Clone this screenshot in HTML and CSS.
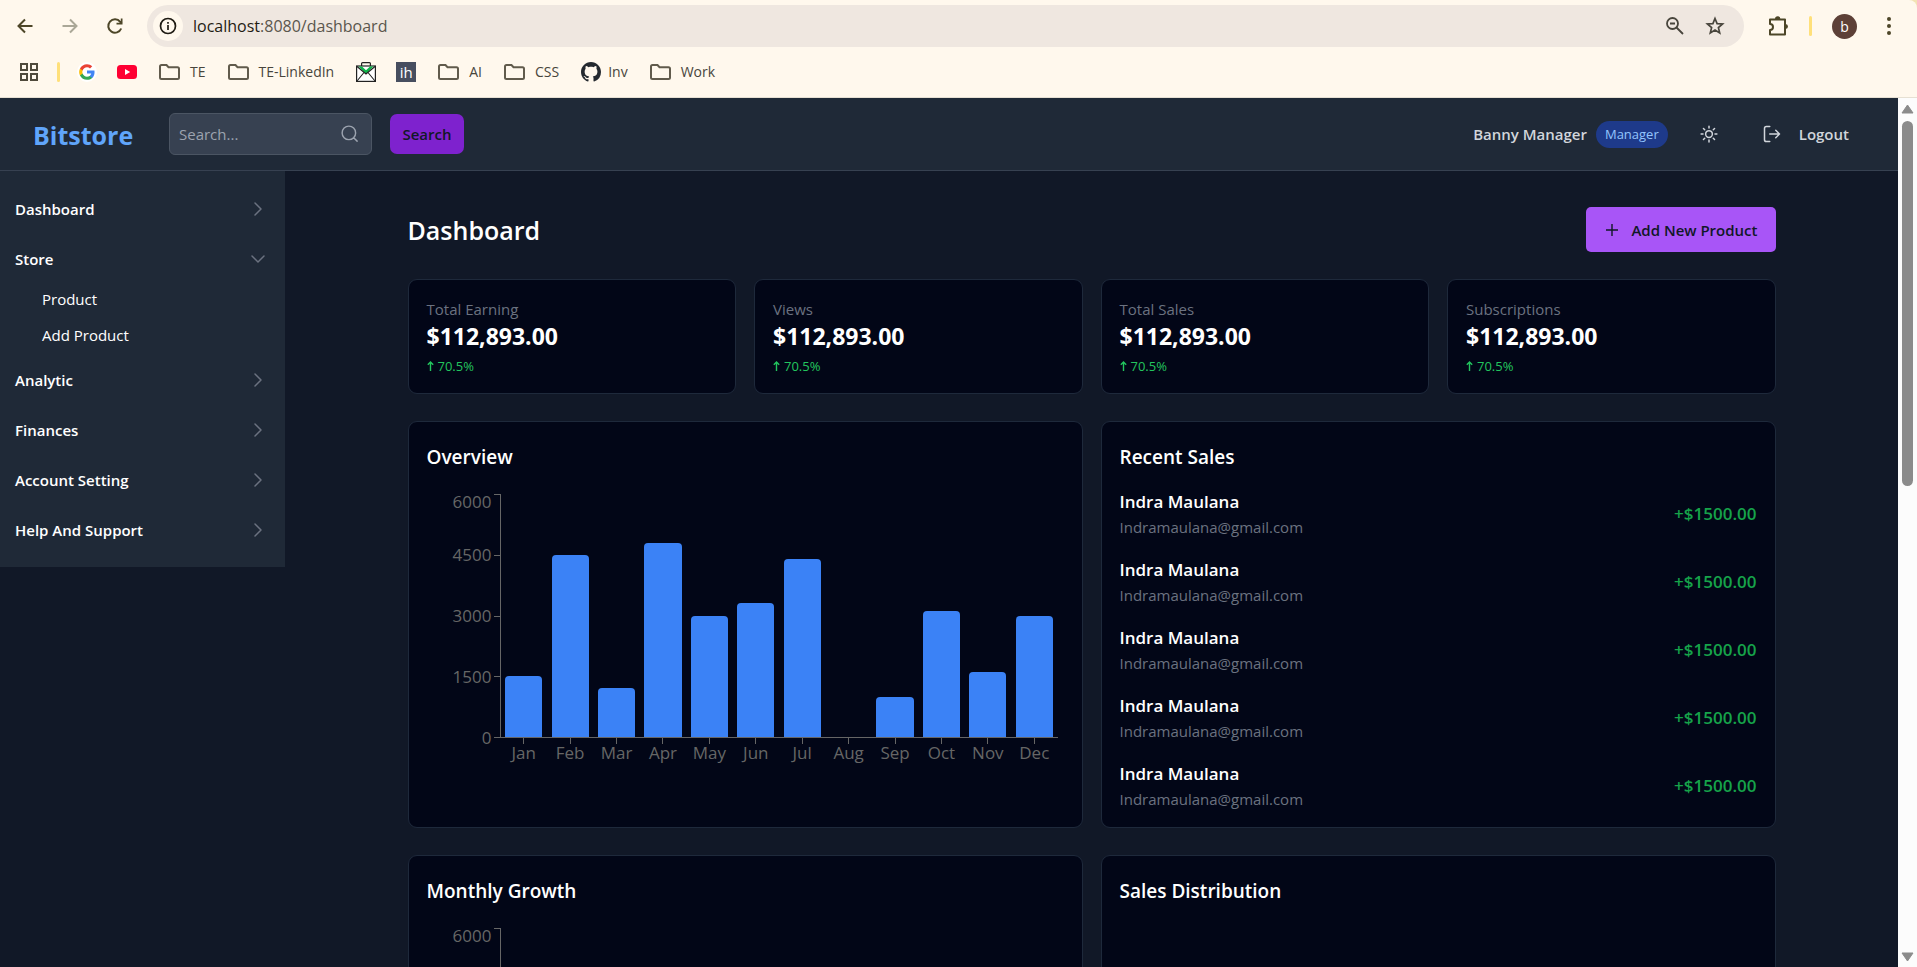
FILE: index.html
```html
<!DOCTYPE html>
<html lang="en">
<head>
<meta charset="utf-8">
<meta name="viewport" content="width=device-width, initial-scale=1">
<title>Bitstore Dashboard</title>
<link rel="stylesheet" href="styles.css">
</head>
<body>
<div class="browser">
  <div class="toolbar">
    <div class="nav-buttons">
      <button class="tool" aria-label="Back"><svg width="18" height="18" viewBox="0 0 18 18"><path d="M16.500 9H3M9 2.500L2.500 9L9 15.500" fill="none" stroke="#4d4628" stroke-width="2"/></svg></button>
      <button class="tool" aria-label="Forward"><svg width="18" height="18" viewBox="0 0 18 18"><path d="M1.500 9H15M9 2.500L15.500 9L9 15.500" fill="none" stroke="#aaa797" stroke-width="2"/></svg></button>
      <button class="tool" aria-label="Reload"><svg width="18" height="18" viewBox="0 0 18 18"><path d="M15.200 11.500A6.700 6.700 0 1 1 14.200 4.800L15.600 6.200" fill="none" stroke="#4d4628" stroke-width="2"/><path d="M16.500 1.500V7.500H10.500V5.800H14.800V1.500Z" fill="#4d4628"/></svg></button>
    </div>
    <div class="omnibox">
      <button class="site-info" aria-label="Site information"><svg width="18" height="18" viewBox="0 0 18 18"><circle cx="9" cy="9" r="7.500" fill="none" stroke="#1f1b13" stroke-width="1.700"/><path d="M9 8V13M9 5V6.700" stroke="#1f1b13" stroke-width="1.700"/></svg></button>
      <span class="url"><b>localhost</b>:8080/dashboard</span>
      <button class="tool" aria-label="Zoom"><svg width="20" height="20" viewBox="0 0 20 20"><circle cx="7.500" cy="7.500" r="5.500" fill="none" stroke="#48453c" stroke-width="1.800"/><path d="M5 7.500H10M11.500 11.500L18 18" stroke="#48453c" stroke-width="1.800"/></svg></button>
      <button class="tool" aria-label="Bookmark"><svg width="20" height="20" viewBox="0 0 20 20"><path d="M10 2.500L12.100 7.600L17.600 8L13.400 11.600L14.700 17L10 14.100L5.300 17L6.600 11.600L2.400 8L7.900 7.600Z" fill="none" stroke="#48453c" stroke-width="1.700"/></svg></button>
    </div>
    <button class="tool" aria-label="Extensions"><svg width="22" height="22" viewBox="0 0 22 22"><path d="M3 4.500H18V19.500H3V15A3 3 0 0 0 3 9Z" fill="none" stroke="#4d4628" stroke-width="2" stroke-linejoin="round"/><path d="M8 4A2.700 2.700 0 0 1 13.400 4ZM18.500 9A2.500 2.500 0 0 1 18.500 14Z" fill="#4d4628"/></svg></button>
    <span class="divider"></span>
    <button class="avatar" aria-label="Profile">b</button>
    <button class="tool" aria-label="Menu"><svg width="6" height="20" viewBox="0 0 6 20"><g fill="#4d4628"><circle cx="3" cy="3" r="2"/><circle cx="3" cy="10" r="2"/><circle cx="3" cy="17" r="2"/></g></svg></button>
  </div>
  <nav class="bookmarks" aria-label="Bookmarks">
    <button class="tool apps" aria-label="Apps"><svg width="18" height="18" viewBox="0 0 18 18"><path d="M1 1H7V7H1ZM11 1H17V7H11ZM1 11H7V17H1ZM11 11H17V17H11Z" fill="none" stroke="#4f4a3c" stroke-width="2"/></svg></button>
    <span class="divider"></span>
    <a class="mark google" href="#" aria-label="Google"><svg width="20" height="20" viewBox="0 0 28 28"><circle cx="14" cy="14" r="14" fill="#fff"/><g transform="translate(2 2)"><path fill="#4285F4" d="M22.560 12.250c0-.78-.07-1.530-.2-2.250H12v4.260h5.920c-.26 1.370-1.040 2.530-2.210 3.310v2.770h3.570c2.080-1.920 3.280-4.740 3.280-8.090z"/><path fill="#34A853" d="M12 23c2.970 0 5.460-.98 7.280-2.660l-3.570-2.770c-.98.66-2.230 1.060-3.710 1.060-2.860 0-5.290-1.930-6.160-4.530H2.180v2.840C3.990 20.530 7.700 23 12 23z"/><path fill="#FBBC05" d="M5.840 14.090c-.22-.66-.35-1.360-.35-2.090s.13-1.430.35-2.090V7.070H2.180C1.430 8.550 1 10.220 1 12s.43 3.450 1.180 4.930l3.660-2.840z"/><path fill="#EA4335" d="M12 5.380c1.620 0 3.060.56 4.210 1.640l3.150-3.150C17.450 2.090 14.970 1 12 1 7.700 1 3.990 3.470 2.180 7.070l3.660 2.840c.87-2.600 3.300-4.530 6.160-4.530z"/></g></svg></a>
    <a class="mark" href="#" aria-label="YouTube"><svg width="20" height="20" viewBox="0 0 20 20"><rect y="3" width="20" height="14" rx="3.500" fill="#f03"/><path d="M8 7L13.200 10L8 13Z" fill="#fff"/></svg></a>
    <a class="mark" href="#"><svg class="folder" width="21" height="16" viewBox="0 0 21 16"><path d="M1 13.500V2.500Q1 1 2.500 1H7.500L9.500 3.200H18.500Q20 3.200 20 4.700V13.500Q20 15 18.500 15H2.500Q1 15 1 13.500Z"/></svg>TE</a>
    <a class="mark" href="#"><svg class="folder" width="21" height="16" viewBox="0 0 21 16"><path d="M1 13.500V2.500Q1 1 2.500 1H7.500L9.500 3.200H18.500Q20 3.200 20 4.700V13.500Q20 15 18.500 15H2.500Q1 15 1 13.500Z"/></svg>TE-LinkedIn</a>
    <a class="mark" href="#" aria-label="Mail jobs"><svg width="20" height="20" viewBox="0 0 20 20"><path d="M5.600 4V1.500Q5.600 .6 6.600 .6H13.400Q14.400 .6 14.400 1.500V4" fill="none" stroke="#222" stroke-width="1.200"/><rect x=".6" y="4" width="18.800" height="15.400" fill="#fff" stroke="#222" stroke-width="1.200"/><path d="M2.500 4.600H6L10 8.200L14 4.600H17.500L10 12Z" fill="#0fb54b"/><path d="M1 4.500L10 12L19 4.500M1 19L8 10.500M19 19L12 10.500" fill="none" stroke="#222" stroke-width="1.100"/></svg></a>
    <a class="mark ih" href="#">ih</a>
    <a class="mark" href="#"><svg class="folder" width="21" height="16" viewBox="0 0 21 16"><path d="M1 13.500V2.500Q1 1 2.500 1H7.500L9.500 3.200H18.500Q20 3.200 20 4.700V13.500Q20 15 18.500 15H2.500Q1 15 1 13.500Z"/></svg>AI</a>
    <a class="mark" href="#"><svg class="folder" width="21" height="16" viewBox="0 0 21 16"><path d="M1 13.500V2.500Q1 1 2.500 1H7.500L9.500 3.200H18.500Q20 3.200 20 4.700V13.500Q20 15 18.500 15H2.500Q1 15 1 13.500Z"/></svg>CSS</a>
    <a class="mark github" href="#"><svg width="20" height="20" viewBox="0 0 16 16"><path fill="#24292f" d="M8 0C3.580 0 0 3.580 0 8c0 3.540 2.290 6.530 5.470 7.590.4.070.55-.17.55-.38 0-.19-.01-.82-.01-1.490-2.010.37-2.530-.49-2.690-.94-.09-.23-.48-.94-.82-1.130-.28-.15-.68-.52-.01-.53.63-.01 1.080.58 1.230.82.72 1.210 1.870.87 2.330.66.070-.52.28-.87.51-1.070-1.780-.2-3.640-.89-3.640-3.950 0-.87.31-1.590.82-2.150-.08-.2-.36-1.020.08-2.120 0 0 .67-.21 2.200.82.64-.18 1.320-.27 2-.27s1.360.09 2 .27c1.530-1.040 2.200-.82 2.200-.82.44 1.100.16 1.920.08 2.120.51.56.82 1.270.82 2.150 0 3.070-1.870 3.750-3.650 3.950.29.25.54.73.54 1.480 0 1.070-.01 1.930-.01 2.200 0 .21.15.46.55.38A8.010 8.010 0 0 0 16 8c0-4.420-3.580-8-8-8z"/></svg>Inv</a>
    <a class="mark" href="#"><svg class="folder" width="21" height="16" viewBox="0 0 21 16"><path d="M1 13.500V2.500Q1 1 2.500 1H7.500L9.500 3.200H18.500Q20 3.200 20 4.700V13.500Q20 15 18.500 15H2.500Q1 15 1 13.500Z"/></svg>Work</a>
  </nav>
</div>

<div class="viewport">
  <div class="page">
    <header class="topbar">
      <a class="brand" href="#">Bitstore</a>
      <form class="search">
        <label class="search-box">
          <input type="text" placeholder="Search..." aria-label="Search">
          <svg width="18" height="18" viewBox="0 0 24 24"><path d="M21.500 21.500l-4.600-4.600M19.500 10.500a9 9 0 1 1-18 0a9 9 0 0 1 18 0Z" fill="none" stroke="#9ca3af" stroke-width="1.900" stroke-linecap="round"/></svg>
        </label>
        <button class="search-button" type="button">Search</button>
      </form>
      <div class="account">
        <span class="user">Banny Manager</span>
        <span class="badge">Manager</span>
        <button class="theme" aria-label="Toggle theme"><svg width="18" height="18" viewBox="0 0 24 24" fill="none" stroke="#d1d5db" stroke-width="2" stroke-linecap="round"><circle cx="12" cy="12" r="4.500"/><path d="M12 1.500V4M12 20V22.500M4.600 4.600L6.300 6.300M17.700 17.700L19.400 19.400M1.500 12H4M20 12H22.500M4.600 19.400L6.300 17.700M17.700 6.300L19.400 4.600"/></svg></button>
        <button class="logout"><svg width="18" height="18" viewBox="0 0 24 24" fill="none" stroke="#d1d5db" stroke-width="2" stroke-linecap="round" stroke-linejoin="round"><path d="M9 2H4.500Q2 2 2 4.500V19.500Q2 22 4.500 22H9M9 12H22M17 7L22 12L17 17"/></svg>Logout</button>
      </div>
    </header>

    <div class="body">
      <nav class="sidebar" aria-label="Main">
        <ul class="menu">
          <li><button class="entry">Dashboard<svg class="chevron" width="18" height="18" viewBox="0 0 18 18"><path d="M6 3L12 9L6 15"/></svg></button></li>
          <li class="open"><button class="entry" aria-expanded="true">Store<svg class="chevron" width="18" height="18" viewBox="0 0 18 18"><path d="M3 6L9 12L15 6"/></svg></button>
            <ul class="submenu">
              <li><a href="#">Product</a></li>
              <li><a href="#">Add Product</a></li>
            </ul>
          </li>
          <li><button class="entry">Analytic<svg class="chevron" width="18" height="18" viewBox="0 0 18 18"><path d="M6 3L12 9L6 15"/></svg></button></li>
          <li><button class="entry">Finances<svg class="chevron" width="18" height="18" viewBox="0 0 18 18"><path d="M6 3L12 9L6 15"/></svg></button></li>
          <li><button class="entry">Account Setting<svg class="chevron" width="18" height="18" viewBox="0 0 18 18"><path d="M6 3L12 9L6 15"/></svg></button></li>
          <li><button class="entry">Help And Support<svg class="chevron" width="18" height="18" viewBox="0 0 18 18"><path d="M6 3L12 9L6 15"/></svg></button></li>
        </ul>
      </nav>

      <main class="main">
        <div class="content">
          <div class="heading">
            <h1>Dashboard</h1>
            <button class="add"><svg width="16" height="16" viewBox="0 0 16 16"><path d="M8 2V14M2 8H14" stroke="#111827" stroke-width="1.400"/></svg>Add New Product</button>
          </div>

          <section class="stats">
            <article class="card stat"><p class="label">Total Earning</p><p class="amount">$112,893.00</p><p class="change"><svg width="7" height="10" viewBox="0 0 7 10"><path d="M3.500 10V1M.8 3.700L3.500 1L6.200 3.700"/></svg>70.5%</p></article>
            <article class="card stat"><p class="label">Views</p><p class="amount">$112,893.00</p><p class="change"><svg width="7" height="10" viewBox="0 0 7 10"><path d="M3.500 10V1M.8 3.700L3.500 1L6.200 3.700"/></svg>70.5%</p></article>
            <article class="card stat"><p class="label">Total Sales</p><p class="amount">$112,893.00</p><p class="change"><svg width="7" height="10" viewBox="0 0 7 10"><path d="M3.500 10V1M.8 3.700L3.500 1L6.200 3.700"/></svg>70.5%</p></article>
            <article class="card stat"><p class="label">Subscriptions</p><p class="amount">$112,893.00</p><p class="change"><svg width="7" height="10" viewBox="0 0 7 10"><path d="M3.500 10V1M.8 3.700L3.500 1L6.200 3.700"/></svg>70.5%</p></article>
          </section>

          <section class="panels">
            <article class="card panel">
              <h2>Overview</h2>
              <div class="chart">
                <div class="y-axis"><span>6000</span><span>4500</span><span>3000</span><span>1500</span><span>0</span></div>
                <div class="ticks"><i></i><i></i><i></i><i></i><i></i></div>
                <div class="plot">
                  <div class="bar" style="height:25%"></div>
                  <div class="bar" style="height:75%"></div>
                  <div class="bar" style="height:20%"></div>
                  <div class="bar" style="height:80%"></div>
                  <div class="bar" style="height:50%"></div>
                  <div class="bar" style="height:55%"></div>
                  <div class="bar" style="height:73.33%"></div>
                  <div class="bar" style="height:0%"></div>
                  <div class="bar" style="height:16.67%"></div>
                  <div class="bar" style="height:51.67%"></div>
                  <div class="bar" style="height:26.67%"></div>
                  <div class="bar" style="height:50%"></div>
                </div>
                <div class="x-axis"><span>Jan</span><span>Feb</span><span>Mar</span><span>Apr</span><span>May</span><span>Jun</span><span>Jul</span><span>Aug</span><span>Sep</span><span>Oct</span><span>Nov</span><span>Dec</span></div>
              </div>
            </article>
            <article class="card panel">
              <h2>Recent Sales</h2>
              <ul class="sales">
                <li><div><p class="name">Indra Maulana</p><p class="email">Indramaulana@gmail.com</p></div><span class="sum">+$1500.00</span></li>
                <li><div><p class="name">Indra Maulana</p><p class="email">Indramaulana@gmail.com</p></div><span class="sum">+$1500.00</span></li>
                <li><div><p class="name">Indra Maulana</p><p class="email">Indramaulana@gmail.com</p></div><span class="sum">+$1500.00</span></li>
                <li><div><p class="name">Indra Maulana</p><p class="email">Indramaulana@gmail.com</p></div><span class="sum">+$1500.00</span></li>
                <li><div><p class="name">Indra Maulana</p><p class="email">Indramaulana@gmail.com</p></div><span class="sum">+$1500.00</span></li>
              </ul>
            </article>
            <article class="card panel">
              <h2>Monthly Growth</h2>
              <div class="chart">
                <div class="y-axis"><span>6000</span></div>
                <div class="ticks"><i></i><i></i><i></i><i></i><i></i></div>
                <div class="plot"></div>
              </div>
            </article>
            <article class="card panel">
              <h2>Sales Distribution</h2>
            </article>
          </section>
        </div>
      </main>
    </div>
  </div>
  <div class="scrollbar" aria-hidden="true">
    <svg width="13" height="10" viewBox="0 0 13 10"><path d="M6.500 1L12 9H1Z" fill="#8b8b8b" stroke="#8b8b8b" stroke-linejoin="round"/></svg>
    <div class="track"><div class="thumb"></div></div>
    <svg width="13" height="10" viewBox="0 0 13 10"><path d="M6.500 9L12 1H1Z" fill="#8b8b8b" stroke="#8b8b8b" stroke-linejoin="round"/></svg>
  </div>
</div>
</body>
</html>
```

FILE: styles.css
```css
* { box-sizing: border-box; }

body {
  margin: 0;
  height: 100vh;
  display: flex;
  flex-direction: column;
  overflow: hidden;
  background: #f3e3b4;
  color: #fff;
  font-family: "Open Sans", "Noto Sans", sans-serif;
  font-size: 15px;
}

h1, h2, p, ul { margin: 0; padding: 0; }
ul { list-style: none; }
a { color: inherit; text-decoration: none; }
button { padding: 0; border: 0; background: none; color: inherit; font: inherit; }
svg { display: block; flex: none; }

/* Browser chrome */
.browser {
  flex: none;
  background: #fff8ed;
  border-bottom: 1px solid #e6e0d3;
  border-top-right-radius: 8px;
  color: #48453c;
}
.toolbar {
  display: flex;
  align-items: center;
  height: 52px;
  padding: 0 25px 0 16px;
}
.tool { display: grid; place-items: center; }
.nav-buttons { display: flex; gap: 27px; width: 131px; }
.omnibox {
  flex: 1;
  display: flex;
  align-items: center;
  height: 42px;
  margin-right: 23px;
  padding: 0 19px 0 6px;
  gap: 20px;
  border-radius: 21px;
  background: #efe7e0;
}
.site-info {
  display: grid;
  place-items: center;
  width: 30px;
  height: 30px;
  border-radius: 50%;
  background: #fff8ed;
}
.url { flex: 1; margin-left: -10px; font-size: 16px; color: #5a564d; }
.url b { font-weight: 400; color: #1f1b13; }
.divider { width: 3px; height: 20px; border-radius: 2px; background: #ffe07a; }
.toolbar .divider { margin: 0 20px; }
.avatar {
  width: 25px;
  height: 25px;
  margin-right: 29px;
  border-radius: 50%;
  background: #5d4037;
  color: #fff;
  font-size: 14px;
  line-height: 25px;
}

.bookmarks {
  display: flex;
  align-items: center;
  gap: 22px;
  height: 45px;
  padding: 0 20px 6px;
  font-size: 14px;
}
.bookmarks .apps { margin-right: -3px; }
.bookmarks .google { margin: 0 -2px 0 -5px; }
.mark { display: flex; align-items: center; gap: 10px; }
.github { gap: 7px; }
.folder path { fill: none; stroke: #615b4c; stroke-width: 2; }
.bookmarks .ih {
  justify-content: center;
  width: 20px;
  height: 20px;
  margin-left: -2px;
  background: #474e5f;
  color: #fff;
  font-size: 15px;
}

/* Page area */
.viewport { flex: 1; min-height: 0; display: flex; }
.page { flex: 1; min-width: 0; overflow: hidden; background: #111827; }
.scrollbar {
  width: 19px;
  display: flex;
  flex-direction: column;
  align-items: center;
  gap: 7px;
  padding: 6px 0 5px;
  background: #fcfcfc;
}
.track { flex: 1; }
.thumb { width: 11px; height: 44.300%; border-radius: 6px; background: #8b8b8b; }

.topbar {
  display: flex;
  align-items: center;
  height: 73px;
  padding: 0 49px 0 33px;
  border-bottom: 1px solid #374151;
  background: #1f2937;
}
.brand { width: 136px; padding-top: 2px; font-size: 25px; font-weight: 700; color: #60a5fa; }
.search { display: flex; align-items: center; gap: 18px; }
.search-box {
  display: flex;
  align-items: center;
  width: 203px;
  height: 42px;
  padding: 0 12px 0 9px;
  border: 1px solid #4b5563;
  border-radius: 6px;
  background: #374151;
}
.search-box input {
  flex: 1;
  min-width: 0;
  padding: 0;
  border: 0;
  outline: 0;
  background: none;
  color: #fff;
  font: inherit;
}
.search-box input::placeholder { color: #9ca3af; }
.search-button {
  width: 74px;
  height: 40px;
  border-radius: 7px;
  background: #7e22ce;
  color: #111827;
  font-weight: 600;
}
.account {
  display: flex;
  align-items: center;
  margin-left: auto;
  color: #d1d5db;
  font-weight: 600;
}
.badge {
  height: 27px;
  margin: 0 32px 0 9px;
  padding: 0 9px;
  border-radius: 14px;
  background: #1e3a8a;
  color: #93c5fd;
  font-size: 13px;
  font-weight: 400;
  line-height: 27px;
}
.theme { margin-right: 45px; }
.logout { display: flex; align-items: center; gap: 18px; }

.body { display: flex; align-items: flex-start; }
.sidebar {
  flex: none;
  width: 285px;
  padding: 20px 18px 19px 15px;
  background: #1f2937;
}
.menu { display: flex; flex-direction: column; gap: 14px; }
.entry {
  display: flex;
  align-items: center;
  justify-content: space-between;
  width: 100%;
  height: 36px;
  font-weight: 600;
}
.open { margin-bottom: -5px; }
.chevron path { fill: none; stroke: #6b7280; stroke-width: 1.500; stroke-linecap: round; stroke-linejoin: round; }
.submenu { margin-top: 4px; padding-left: 27px; line-height: 36px; }

.main { flex: 1; min-width: 0; padding: 36px; }
.content { max-width: 1368px; margin: 0 auto; }
.heading { display: flex; align-items: center; justify-content: space-between; margin-bottom: 27px; }
h1 { font-size: 25px; font-weight: 600; line-height: 36px; }
.add {
  display: flex;
  align-items: center;
  justify-content: center;
  gap: 11px;
  height: 45px;
  padding: 0 18px;
  border-radius: 5px;
  background: #a855f7;
  color: #111827;
  font-weight: 600;
}

.card {
  border: 1px solid #1e293b;
  border-radius: 9px;
  background: #020617;
}
.stats {
  display: grid;
  grid-template-columns: repeat(4, 1fr);
  gap: 18px;
  margin-bottom: 27px;
}
.stat { padding: 18px 18px 17px; }
.label { line-height: 22px; color: #6b7280; }
.amount { font-size: 23px; font-weight: 700; line-height: 32px; }
.change {
  display: flex;
  align-items: center;
  gap: 4px;
  margin-top: 4px;
  color: #22c55e;
  font-size: 13px;
  line-height: 20px;
}
.change path { fill: none; stroke: #22c55e; stroke-width: 1.400; }

.panels {
  display: grid;
  grid-template-columns: repeat(2, 1fr);
  gap: 27px 18px;
}
.panel { padding: 21px 18px 16px; }
h2 { margin-bottom: 17px; font-size: 19px; font-weight: 600; line-height: 28px; }

.chart {
  display: grid;
  grid-template-columns: 67px 7px 1fr;
  grid-template-rows: 244px auto;
  padding: 6px 6px 0 0;
  color: #666;
  font-size: 17px;
}
.y-axis {
  display: flex;
  flex-direction: column;
  justify-content: space-between;
  align-items: flex-end;
  margin: -8px 0;
  padding-right: 2px;
  line-height: 16px;
}
.y-axis span { height: 16px; }
/* The top label sits below its tick so that it stays inside the chart */
.y-axis span:first-child { line-height: 32px; }
.ticks {
  display: flex;
  flex-direction: column;
  justify-content: space-between;
  border-right: 1px solid #666;
}
.ticks i { height: 1px; background: #666; }
.plot {
  display: grid;
  grid-template-columns: repeat(12, 1fr);
  align-items: end;
  border-bottom: 1px solid #666;
}
.bar {
  width: 80%;
  justify-self: center;
  border-radius: 4px 4px 0 0;
  background: #3b82f6;
}
.x-axis {
  grid-column: 3;
  display: grid;
  grid-template-columns: repeat(12, 1fr);
  text-align: center;
  line-height: 18px;
}
.x-axis span::before {
  content: "";
  display: block;
  width: 1px;
  height: 6px;
  margin: 0 auto;
  background: #666;
}

.sales { display: flex; flex-direction: column; gap: 17px; }
.sales li { display: flex; align-items: center; justify-content: space-between; }
.name { font-size: 17px; font-weight: 600; line-height: 27px; }
.email { color: #6b7280; line-height: 24px; }
.sum { color: #16a34a; font-size: 17px; font-weight: 600; }
```
